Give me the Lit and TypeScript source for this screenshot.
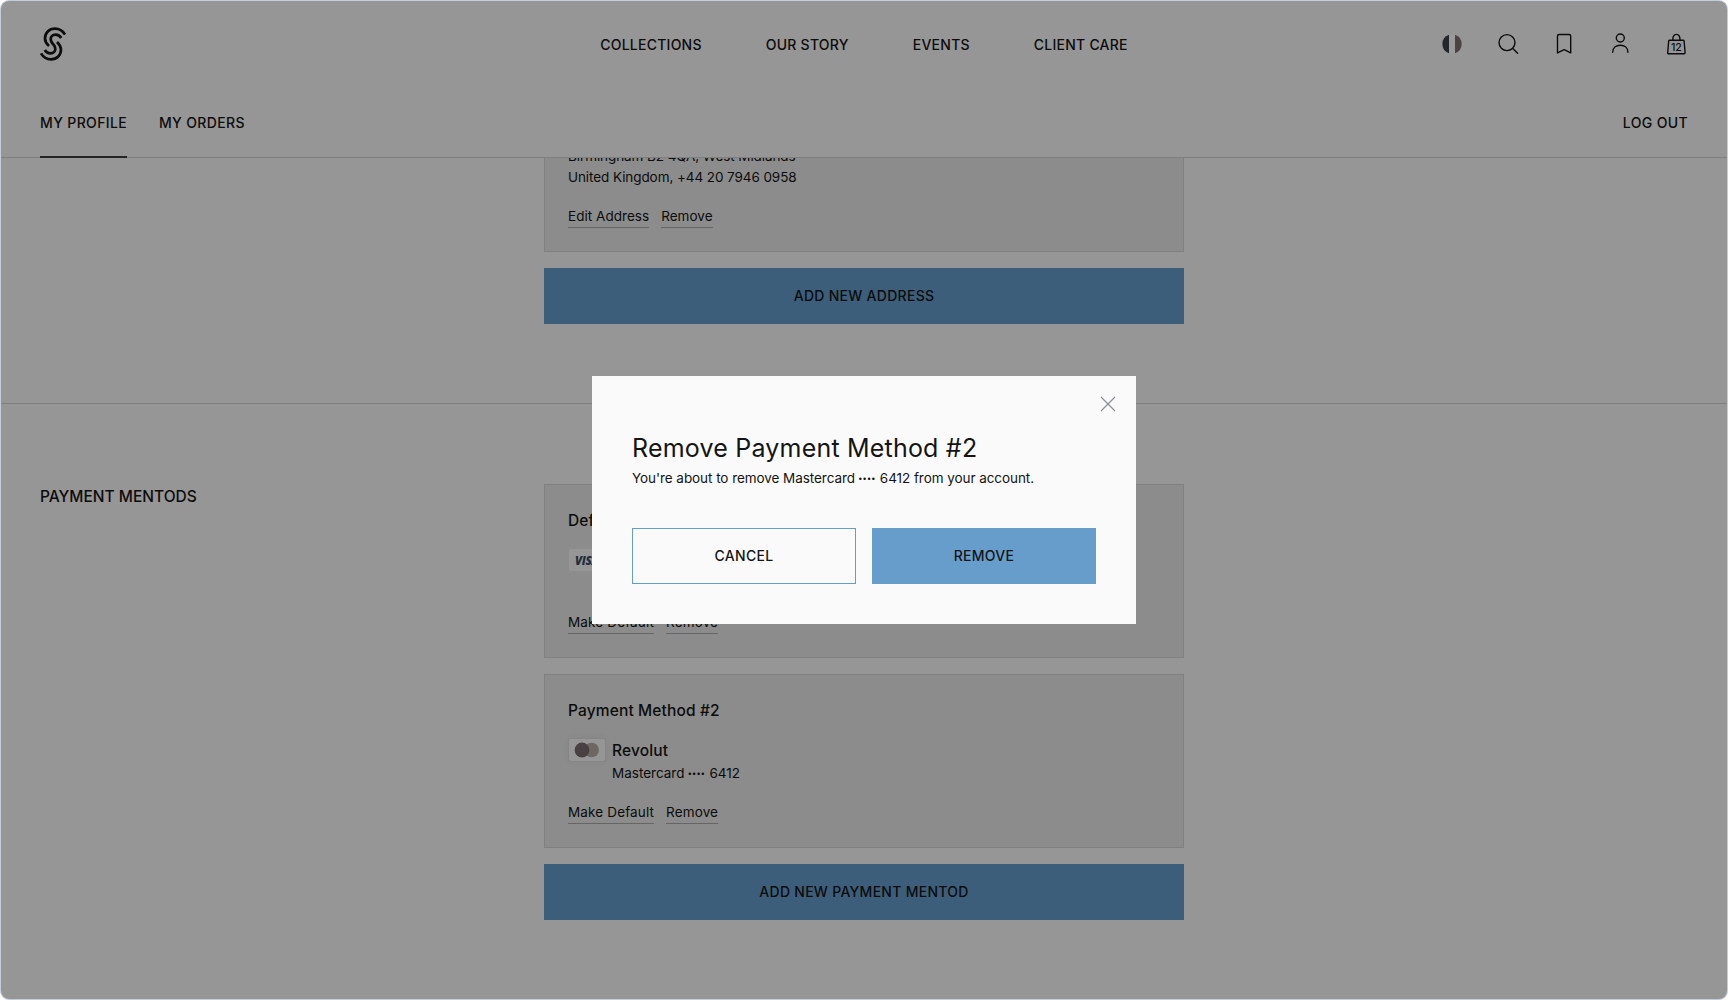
import { html, css, svg, nothing, LitElement, TemplateResult } from 'lit';
import { customElement, property } from 'lit/decorators.js';

const icons: Record<string, TemplateResult> = {
  flag: svg`
    <circle cx="12" cy="12" r="9.7" fill="#fff" stroke="none" />
    <path d="M9 2.8v18.4a9.7 9.7 0 0 1 0-18.4z" fill="#3c444c" stroke="none" />
    <path d="M15 2.8v18.4a9.7 9.7 0 0 0 0-18.4z" fill="#7d6e71" stroke="none" />
  `,
  search: svg`<circle cx="11" cy="10.6" r="8" /><path d="m16.8 16.4 4.8 4.8" />`,
  bookmark: svg`<path d="M5.500 20.900V3.900c0-.9.6-1.400 1.500-1.400h10.200c.9 0 1.500.5 1.500 1.400v17l-6.600-3.300z" />`,
  user: svg`
    <circle cx="12.3" cy="6" r="4" />
    <path d="M4.700 20.300c0-4.500 3.300-7 7.600-7s7.600 2.500 7.600 7" />
  `,
  bag: svg`
    <path d="M5.6 8.2h13.6c.5 0 .8.3.9.8l1 11.8c0 .6-.3 1-.9 1H4.600c-.6 0-.9-.4-.9-1L4.700 9c.1-.5.4-.8.9-.8z" />
    <path d="M8.800 8c0-3.600 1.300-5.600 3.600-5.600s3.600 2 3.600 5.600" />
    <text x="12.4" y="18.9" text-anchor="middle" class="count">12</text>
  `,
};

const dotStyles = css`
  .dots {
    font-family: 'Liberation Sans', sans-serif;
    font-size: 9px;
    line-height: 1;
    letter-spacing: 1.2px;
    vertical-align: 1px;
  }
`;

@customElement('payment-card')
export class PaymentCard extends LitElement {
  @property() heading = '';
  @property() brand = 'visa';
  @property() name = '';
  @property() digits = '';

  static styles = [
    dotStyles,
    css`
      :host {
        display: block;
        box-sizing: border-box;
        height: 174px;
        padding: 23px;
        border: 1px solid #d6d6d6;
        background: #e9e9e9;
      }

      .heading,
      .name {
        font-size: 15.5px;
        font-weight: 500;
        letter-spacing: 0.14px;
      }

      .heading {
        line-height: 25px;
      }

      .method {
        display: flex;
        gap: 7px;
        height: 45px;
        margin: 16px 0 18px;
      }

      .badge {
        display: flex;
        align-items: center;
        justify-content: center;
        box-sizing: border-box;
        width: 36px;
        height: 22px;
        margin-left: 1px;
        border-radius: 2px;
        background: #fafafa;
      }

      .badge.mastercard {
        box-shadow: 0 0 0 1px #dedede, 0 0 8px rgba(0, 0, 0, 0.06);
      }

      .visa-mark {
        font: italic 800 11.5px 'Open Sans', sans-serif;
        letter-spacing: -0.3px;
        color: #3a4e68;
      }

      .name {
        line-height: 23px;
      }

      .detail {
        line-height: 22px;
      }

      .links {
        display: flex;
        gap: 12px;
      }

      .link {
        padding-bottom: 1px;
        border-bottom: 1px solid #a8a8a8;
        line-height: 20px;
        letter-spacing: 0.14px;
      }
    `,
  ];

  renderBadge(): TemplateResult {
    if (this.brand === 'visa') {
      return html`<div class="badge"><span class="visa-mark">VISA</span></div>`;
    }
    return html`
      <div class="badge mastercard">
        <svg width="26" height="16" viewBox="0 0 26 16">
          <circle cx="17.6" cy="8" r="7.3" fill="#b6aca3" />
          <circle cx="8" cy="8" r="7.4" fill="#786b70" />
        </svg>
      </div>
    `;
  }

  render(): TemplateResult {
    return html`
      <div class="heading">${this.heading}</div>
      <div class="method">
        ${this.renderBadge()}
        ${this.name
          ? html`<div>
              <div class="name">${this.name}</div>
              <div class="detail">
                Mastercard <span class="dots">••••</span> ${this.digits}
              </div>
            </div>`
          : nothing}
      </div>
      <div class="links">
        <span class="link">Make Default</span>
        <span class="link">Remove</span>
      </div>
    `;
  }
}

@customElement('app-root')
export class AppRoot extends LitElement {
  static styles = [
    dotStyles,
    css`
      :host {
        display: block;
        width: 1728px;
        height: 1000px;
        background: #fff;
        font-family: Inter, sans-serif;
        font-size: 13.5px;
        color: #141414;
      }

      .shell {
        position: relative;
        box-sizing: border-box;
        height: 1000px;
        overflow: hidden;
        border: 1px solid #c3cddb;
        border-radius: 9px;
        background: #fafafa;
      }

      .header {
        box-sizing: border-box;
        height: 157px;
        padding: 0 39px;
        border-bottom: 1px solid #d4d4d4;
        font-size: 14px;
        font-weight: 500;
      }

      .top {
        display: grid;
        grid-template-columns: 1fr auto 1fr;
        align-items: center;
        height: 86px;
      }

      .logo {
        display: block;
        margin-left: -1px;
        fill: none;
        stroke: #141414;
        stroke-width: 2.7;
      }

      .menu {
        display: flex;
        gap: 64px;
        letter-spacing: 0.24px;
      }

      .icons {
        display: flex;
        justify-content: flex-end;
        gap: 32px;
      }

      .icon {
        display: block;
        fill: none;
        stroke: #141414;
        stroke-width: 1.4;
        stroke-linecap: round;
        stroke-linejoin: round;
      }

      .count {
        fill: #141414;
        stroke: none;
        font-size: 10.5px;
        font-weight: 500;
      }

      .tabs {
        display: flex;
        gap: 32px;
        height: 68px;
        margin-top: 2px;
        line-height: 68px;
        letter-spacing: 0.35px;
      }

      .tab.active {
        box-sizing: border-box;
        height: 69px;
        border-bottom: 2px solid #3c3c3c;
      }

      .logout {
        margin-left: auto;
      }

      .content {
        height: 841px;
        overflow: hidden;
      }

      .section {
        display: grid;
        grid-template-columns: 504px 640px;
        padding: 80px 0 79px 39px;
        border-bottom: 1px solid #d4d4d4;
      }

      .section.addresses {
        padding-top: 0;
      }

      .section.payments {
        border-bottom: none;
      }

      .title {
        font-size: 15.5px;
        font-weight: 500;
        line-height: 25px;
      }

      .list {
        display: flex;
        grid-column: 2;
        flex-direction: column;
        gap: 16px;
      }

      /* scrolled under the header */
      .address {
        margin-top: -30px;
        padding: 17px 23px 23px;
        border: 1px solid #d6d6d6;
        background: #e9e9e9;
        line-height: 21px;
        letter-spacing: -0.08px;
      }

      .links {
        display: flex;
        gap: 12px;
        margin-top: 18px;
        line-height: 20px;
        letter-spacing: 0.04px;
      }

      .link {
        padding-bottom: 1px;
        border-bottom: 1px solid #a8a8a8;
      }

      .button {
        box-sizing: border-box;
        height: 56px;
        padding: 0 0 2px;
        border: 1px solid #679dcb;
        background: #679dcb;
        color: #141414;
        font: 500 14px Inter, sans-serif;
        letter-spacing: 0.28px;
      }

      .button.outline {
        background: transparent;
      }

      .overlay {
        position: absolute;
        inset: 0;
        display: flex;
        align-items: center;
        justify-content: center;
        background: rgba(0, 0, 0, 0.4);
      }

      .modal {
        position: relative;
        box-sizing: border-box;
        width: 544px;
        height: 248px;
        padding: 56px 40px 40px;
        background: #fafafa;
      }

      .modal-title {
        font-size: 25px;
        line-height: 32px;
        letter-spacing: 0.2px;
      }

      .modal-text {
        margin: 4px 0 39px;
        line-height: 21px;
        letter-spacing: -0.06px;
        white-space: nowrap;
      }

      .actions {
        display: grid;
        grid-template-columns: 1fr 1fr;
        gap: 16px;
      }

      .close {
        position: absolute;
        top: 20px;
        right: 20px;
        stroke: #8b8d98;
        stroke-width: 1.2;
      }
    `,
  ];

  renderLogo(): TemplateResult {
    const hook = 'M26 7.6C23.6 3.6 20.2 1.7 16 1.7 10 1.7 6 6 6 11.4c0 3 1.6 5.4 4 7.6';
    return html`
      <svg class="logo" width="28" height="34" viewBox="0 0 28 34">
        <path d=${hook} />
        <path d=${hook} transform="rotate(180 14 17)" />
        <path
          d="M22.2 11c-1.4-2.4-3.4-3.3-5.7-3.3-3 0-4.8 2-4.8 4.4 0 2.700 1.300 3.700 2.300 4.900s2.300 2.200 2.300 4.900c0 2.400-1.800 4.400-4.800 4.400-2.300 0-4.300-.9-5.700-3.300"
        />
      </svg>
    `;
  }

  renderHeader(): TemplateResult {
    const menu = ['COLLECTIONS', 'OUR STORY', 'EVENTS', 'CLIENT CARE'];
    return html`
      <div class="header">
        <div class="top">
          ${this.renderLogo()}
          <div class="menu">${menu.map(item => html`<span>${item}</span>`)}</div>
          <div class="icons">
            ${Object.values(icons).map(
              icon => html`<svg class="icon" width="24" height="24" viewBox="0 0 24 24">${icon}</svg>`
            )}
          </div>
        </div>
        <div class="tabs">
          <span class="tab active">MY PROFILE</span>
          <span class="tab">MY ORDERS</span>
          <span class="logout">LOG OUT</span>
        </div>
      </div>
    `;
  }

  renderModal(): TemplateResult {
    return html`
      <div class="overlay">
        <div class="modal">
          <svg class="close" width="16" height="16" viewBox="0 0 16 16">
            <path d="m1 1 14 14M15 1 1 15" />
          </svg>
          <div class="modal-title">Remove Payment Method #2</div>
          <div class="modal-text">
            You're about to remove Mastercard <span class="dots">••••</span> 6412 from your account.
          </div>
          <div class="actions">
            <button class="button outline">CANCEL</button>
            <button class="button">REMOVE</button>
          </div>
        </div>
      </div>
    `;
  }

  render(): TemplateResult {
    return html`
      <div class="shell">
        ${this.renderHeader()}
        <div class="content">
          <div class="section addresses">
            <div class="list">
              <div class="address">
                <div>Birmingham B2 4QA, West Midlands</div>
                <div>United Kingdom, +44 20 7946 0958</div>
                <div class="links">
                  <span class="link">Edit Address</span>
                  <span class="link">Remove</span>
                </div>
              </div>
              <button class="button">ADD NEW ADDRESS</button>
            </div>
          </div>
          <div class="section payments">
            <div class="title">PAYMENT MENTODS</div>
            <div class="list">
              <payment-card heading="Default"></payment-card>
              <payment-card
                heading="Payment Method #2"
                brand="mastercard"
                name="Revolut"
                digits="6412"
              ></payment-card>
              <button class="button">ADD NEW PAYMENT MENTOD</button>
            </div>
          </div>
        </div>
        ${this.renderModal()}
      </div>
    `;
  }
}

declare global {
  interface HTMLElementTagNameMap {
    'app-root': AppRoot;
    'payment-card': PaymentCard;
  }
}
